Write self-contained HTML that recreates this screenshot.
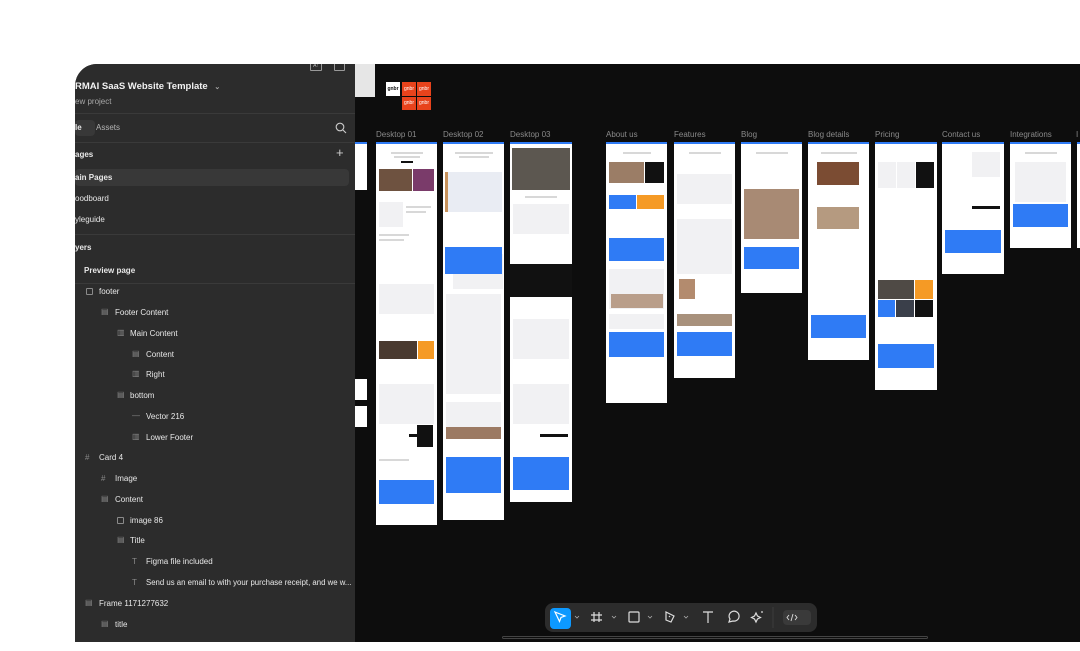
<!DOCTYPE html>
<html><head><meta charset="utf-8"><style>
*{margin:0;padding:0;box-sizing:border-box}
body{width:1080px;height:651px;background:#fff;position:relative;overflow:hidden;font-family:"Liberation Sans",sans-serif}
.a{position:absolute}
#panel{left:75px;top:64px;width:1005px;height:578px;background:#0d0d0d;border-top-left-radius:22px;overflow:hidden}
#side{left:75px;top:64px;width:280px;height:578px;background:#2c2c2c;border-top-left-radius:22px;overflow:hidden;color:#e8e8e8;font-size:8px}
#side .t{position:absolute;white-space:nowrap}
.dv{position:absolute;left:0;width:280px;height:1px;background:#3a3a3a}
.ic{position:absolute;width:7px;height:7px;border:1px solid #8a8a8a;border-radius:1px}
.f{position:absolute;background:#fff;border-top:2px solid #2f7bf5;overflow:hidden}
.f div{position:absolute}
.lb{position:absolute;top:130px;font-size:8px;color:#8a8a8a;white-space:nowrap}
.bl{background:#2f7bf5}
.bk{background:#111}
.br{background:#8a6a55}
.or{background:#f59a25}
.gl{background:#d8d8d8;height:2px}
.gr{background:#f1f1f3}
</style></head><body>
<div id="panel" class="a"></div>
<div class="a" style="left:355px;top:64px;width:20px;height:33px;background:#e6e6e6"></div>
<div class="a" style="left:386px;top:82px;width:14px;height:14px;background:#fff;font-size:5px;font-weight:bold;color:#111;text-align:center;line-height:14px">gnbr</div>
<div class="a" style="left:402px;top:82px;width:14px;height:14px;background:#e8431c;font-size:5px;color:#fff;text-align:center;line-height:14px">gnbr</div>
<div class="a" style="left:417px;top:82px;width:14px;height:14px;background:#e8431c;font-size:5px;color:#fff;text-align:center;line-height:14px">gnbr</div>
<div class="a" style="left:402px;top:97px;width:14px;height:13px;background:#e8431c;font-size:5px;color:#fff;text-align:center;line-height:13px">gnbr</div>
<div class="a" style="left:417px;top:97px;width:14px;height:13px;background:#e8431c;font-size:5px;color:#fff;text-align:center;line-height:13px">gnbr</div>

<div class="a" style="left:355px;top:142px;width:12px;height:48px;background:#fff;border-top:2px solid #2f7bf5"></div>
<div class="a" style="left:355px;top:379px;width:12px;height:21px;background:#fff"></div>
<div class="a" style="left:355px;top:406px;width:12px;height:21px;background:#fff"></div>

<div class="lb" style="left:376px">Desktop 01</div>
<div class="lb" style="left:443px">Desktop 02</div>
<div class="lb" style="left:510px">Desktop 03</div>
<div class="lb" style="left:606px">About us</div>
<div class="lb" style="left:674px">Features</div>
<div class="lb" style="left:741px">Blog</div>
<div class="lb" style="left:808px">Blog details</div>
<div class="lb" style="left:875px">Pricing</div>
<div class="lb" style="left:942px">Contact us</div>
<div class="lb" style="left:1010px">Integrations</div>
<div class="lb" style="left:1076px">I</div>

<div class="f" style="left:376px;top:142px;width:61px;height:383px">
<div class="gl" style="left:15px;top:8px;width:32px"></div><div class="gl" style="left:18px;top:12px;width:26px"></div>
<div class="bk" style="left:25px;top:17px;width:12px;height:2px"></div>
<div class="br" style="left:3px;top:25px;width:33px;height:22px;background:#6e5240"></div>
<div class="a" style="left:37px;top:25px;width:21px;height:22px;background:#7a3b6a"></div>
<div class="gr" style="left:3px;top:58px;width:24px;height:25px"></div>
<div class="gl" style="left:30px;top:62px;width:25px"></div><div class="gl" style="left:30px;top:67px;width:20px"></div>
<div class="gl" style="left:3px;top:90px;width:30px"></div><div class="gl" style="left:3px;top:95px;width:25px"></div>
<div class="gr" style="left:3px;top:140px;width:55px;height:30px"></div>
<div class="br" style="left:3px;top:197px;width:38px;height:18px;background:#4a3a30"></div>
<div class="or" style="left:42px;top:197px;width:16px;height:18px"></div>
<div class="gr" style="left:3px;top:240px;width:55px;height:40px"></div>
<div class="bk" style="left:41px;top:281px;width:16px;height:22px"></div>
<div class="bk" style="left:33px;top:290px;width:22px;height:3px"></div>
<div class="gl" style="left:3px;top:315px;width:30px"></div>
<div class="bl" style="left:3px;top:336px;width:55px;height:24px"></div>
</div>
<div class="f" style="left:443px;top:142px;width:61px;height:378px">
<div class="gl" style="left:12px;top:8px;width:38px"></div><div class="gl" style="left:16px;top:12px;width:30px"></div>
<div class="a" style="left:2px;top:28px;width:57px;height:40px;background:#e9ecf3"></div>
<div class="a" style="left:2px;top:28px;width:3px;height:40px;background:#c7925c"></div>
<div class="gr" style="left:10px;top:110px;width:50px;height:35px"></div>
<div class="bl" style="left:2px;top:103px;width:57px;height:27px"></div>
<div class="gr" style="left:3px;top:150px;width:55px;height:100px"></div>
<div class="gr" style="left:3px;top:258px;width:55px;height:30px"></div>
<div class="br" style="left:3px;top:283px;width:55px;height:12px;background:#9c7a63"></div>
<div class="bl" style="left:3px;top:313px;width:55px;height:36px"></div>
</div>
<div class="f" style="left:510px;top:142px;width:62px;height:360px">
<div class="a" style="left:2px;top:4px;width:58px;height:42px;background:#5c5750"></div>
<div class="gl" style="left:15px;top:52px;width:32px"></div>
<div class="gr" style="left:3px;top:60px;width:56px;height:30px"></div>
<div class="bk" style="left:0;top:120px;width:62px;height:33px"></div>
<div class="gr" style="left:3px;top:175px;width:56px;height:40px"></div>
<div class="gr" style="left:3px;top:240px;width:56px;height:40px"></div>
<div class="bk" style="left:30px;top:290px;width:28px;height:3px"></div>
<div class="bl" style="left:3px;top:313px;width:56px;height:33px"></div>
</div>
<div class="f" style="left:606px;top:142px;width:61px;height:261px">
<div class="gl" style="left:17px;top:8px;width:28px"></div>
<div class="br" style="left:3px;top:18px;width:35px;height:21px;background:#9b7d66"></div>
<div class="bk" style="left:39px;top:18px;width:19px;height:21px"></div>
<div class="bl" style="left:3px;top:51px;width:27px;height:14px"></div>
<div class="or" style="left:31px;top:51px;width:27px;height:14px"></div>
<div class="bl" style="left:3px;top:94px;width:55px;height:23px"></div>
<div class="gr" style="left:3px;top:125px;width:55px;height:40px"></div>
<div class="br" style="left:5px;top:150px;width:52px;height:14px;background:#b99e8a"></div>
<div class="gr" style="left:3px;top:170px;width:55px;height:15px"></div>
<div class="bl" style="left:3px;top:188px;width:55px;height:25px"></div>
</div>
<div class="f" style="left:674px;top:142px;width:61px;height:236px">
<div class="gl" style="left:15px;top:8px;width:32px"></div>
<div class="gr" style="left:3px;top:30px;width:55px;height:30px"></div>
<div class="gr" style="left:3px;top:75px;width:55px;height:30px"></div>
<div class="gr" style="left:3px;top:100px;width:55px;height:30px"></div>
<div class="br" style="left:5px;top:135px;width:16px;height:20px;background:#b38b6e"></div>
<div class="br" style="left:3px;top:170px;width:55px;height:12px;background:#a8917c"></div>
<div class="bl" style="left:3px;top:188px;width:55px;height:24px"></div>
</div>
<div class="f" style="left:741px;top:142px;width:61px;height:151px">
<div class="gl" style="left:15px;top:8px;width:32px"></div>
<div class="br" style="left:3px;top:45px;width:55px;height:50px;background:#a88a74"></div>
<div class="bl" style="left:3px;top:103px;width:55px;height:22px"></div>
</div>
<div class="f" style="left:808px;top:142px;width:61px;height:218px">
<div class="gl" style="left:13px;top:8px;width:36px"></div>
<div class="br" style="left:9px;top:18px;width:42px;height:23px;background:#7b4c33"></div>
<div class="br" style="left:9px;top:63px;width:42px;height:22px;background:#b59a80"></div>
<div class="bl" style="left:3px;top:171px;width:55px;height:23px"></div>
</div>
<div class="f" style="left:875px;top:142px;width:62px;height:248px">
<div class="gr" style="left:3px;top:18px;width:18px;height:26px"></div>
<div class="gr" style="left:22px;top:18px;width:18px;height:26px"></div>
<div class="bk" style="left:41px;top:18px;width:18px;height:26px"></div>
<div class="br" style="left:3px;top:136px;width:36px;height:19px;background:#4f4a45"></div>
<div class="or" style="left:40px;top:136px;width:18px;height:19px"></div>
<div class="bl" style="left:3px;top:156px;width:17px;height:17px"></div>
<div class="br" style="left:21px;top:156px;width:18px;height:17px;background:#3a3f4a"></div>
<div class="bk" style="left:40px;top:156px;width:18px;height:17px"></div>
<div class="bl" style="left:3px;top:200px;width:56px;height:24px"></div>
</div>
<div class="f" style="left:942px;top:142px;width:62px;height:132px">
<div class="gr" style="left:30px;top:8px;width:28px;height:25px"></div>
<div class="bk" style="left:30px;top:62px;width:28px;height:3px"></div>
<div class="bl" style="left:3px;top:86px;width:56px;height:23px"></div>
</div>
<div class="f" style="left:1010px;top:142px;width:61px;height:106px">
<div class="gl" style="left:15px;top:8px;width:32px"></div>
<div class="gr" style="left:5px;top:18px;width:51px;height:40px"></div>
<div class="bl" style="left:3px;top:60px;width:55px;height:23px"></div>
</div>
<div class="f" style="left:1077px;top:142px;width:5px;height:106px"></div>

<div class="a" style="left:545px;top:603px;width:272px;height:29px;background:#2c2c2c;border-radius:8px"></div>
<div class="a" style="left:550px;top:608px;width:21px;height:21px;background:#0d99ff;border-radius:4px"></div>
<svg class="a" style="left:545px;top:603px" width="272" height="29" fill="none" stroke="#ddd" stroke-width="1.2">
<path d="M10 9l10 4-4 1.5-1.5 4z" stroke="#fff"/>
<path d="M30 13l2 2 2-2" stroke="#aaa" stroke-width="0.8"/>
<path d="M49 9v10M54 9v10M46 12h11M46 17h11"/>
<path d="M67 13l2 2 2-2" stroke="#aaa" stroke-width="0.8"/>
<rect x="84" y="9" width="10" height="10" rx="1"/>
<path d="M103 13l2 2 2-2" stroke="#aaa" stroke-width="0.8"/>
<path d="M121 9l8 4-3 6-5-2z M124 13l1 1"/>
<path d="M139 13l2 2 2-2" stroke="#aaa" stroke-width="0.8"/>
<path d="M158 9h10M163 9v11"/>
<path d="M184 19l1-3a5 5 0 1 1 3 2z"/>
<path d="M211 10l1.5 3 3 1.5-3 1.5-1.5 3-1.5-3-3-1.5 3-1.5z M217 8v2"/>
<path d="M228 4v21" stroke="#3a3a3a"/>
<rect x="238" y="7" width="28" height="15" rx="4" fill="#3a3a3a" stroke="none"/>
<path d="M244 12l-2 2.5 2 2.5M250 12l2 2.5-2 2.5M248 11l-2 7" stroke-width="0.9"/>
</svg>
<div class="a" style="left:502px;top:636px;width:426px;height:3px;border:1px solid #444;border-radius:2px"></div>

<div id="side" class="a">
<div class="t" style="left:0;top:17px;font-size:9.5px;font-weight:bold;color:#f2f2f2">RMAI SaaS Website Template <span style="font-size:7px;color:#aaa;margin-left:4px">⌄</span></div>
<div class="t" style="left:0;top:33px;color:#a8a8a8">ew project</div>
<div class="a" style="left:235px;top:-2px;width:12px;height:9px;border:1px solid #999;border-radius:1px;font-size:5px;color:#bbb;text-align:center;line-height:7px">A↑</div>
<div class="a" style="left:259px;top:-2px;width:11px;height:9px;border:1px solid #999;border-radius:1px"></div>
<div class="dv" style="top:49px"></div>
<div class="a" style="left:0;top:56px;width:20px;height:16px;background:#383838;border-radius:4px"></div>
<div class="t" style="left:0;top:59px;font-weight:bold">le</div>
<div class="t" style="left:21px;top:59px;color:#b5b5b5">Assets</div>
<svg class="a" style="left:260px;top:58px" width="12" height="12" fill="none" stroke="#ccc" stroke-width="1.1"><circle cx="5" cy="5" r="3.8"/><path d="M8 8l3 3"/></svg>
<div class="dv" style="top:78px"></div>
<div class="t" style="left:0;top:86px;font-weight:bold">ages</div>
<div class="t" style="left:261px;top:81px;font-size:13px;color:#ccc">+</div>
<div class="a" style="left:0;top:105px;width:274px;height:17px;background:#383838;border-radius:4px"></div>
<div class="t" style="left:0;top:109px;font-weight:bold">ain Pages</div>
<div class="t" style="left:0;top:130px">oodboard</div>
<div class="t" style="left:0;top:151px">yleguide</div>
<div class="dv" style="top:170px"></div>
<div class="t" style="left:0;top:179px;font-weight:bold">yers</div>
<div class="t" style="left:9px;top:202px;font-weight:bold">Preview page</div>
<div class="dv" style="top:219px"></div>
<div class="ic" style="left:11px;top:224px"></div><div class="t" style="left:24px;top:223px">footer</div>
<div class="t" style="left:26px;top:243px;color:#888">▤</div><div class="t" style="left:40px;top:244px">Footer Content</div>
<div class="t" style="left:42px;top:264px;color:#888">▥</div><div class="t" style="left:55px;top:265px">Main Content</div>
<div class="t" style="left:57px;top:285px;color:#888">▤</div><div class="t" style="left:71px;top:286px">Content</div>
<div class="t" style="left:57px;top:305px;color:#888">▥</div><div class="t" style="left:71px;top:306px">Right</div>
<div class="t" style="left:42px;top:326px;color:#888">▤</div><div class="t" style="left:55px;top:327px">bottom</div>
<div class="t" style="left:57px;top:347px;color:#888">—</div><div class="t" style="left:71px;top:348px">Vector 216</div>
<div class="t" style="left:57px;top:368px;color:#888">▥</div><div class="t" style="left:71px;top:369px">Lower Footer</div>
<div class="t" style="left:10px;top:389px;color:#888">#</div><div class="t" style="left:24px;top:389px">Card 4</div>
<div class="t" style="left:26px;top:410px;color:#888">#</div><div class="t" style="left:40px;top:410px">Image</div>
<div class="t" style="left:26px;top:430px;color:#888">▤</div><div class="t" style="left:40px;top:431px">Content</div>
<div class="ic" style="left:42px;top:453px"></div><div class="t" style="left:55px;top:452px">image 86</div>
<div class="t" style="left:42px;top:471px;color:#888">▤</div><div class="t" style="left:55px;top:472px">Title</div>
<div class="t" style="left:57px;top:493px;color:#888">T</div><div class="t" style="left:71px;top:493px">Figma file included</div>
<div class="t" style="left:57px;top:514px;color:#888">T</div><div class="t" style="left:71px;top:514px;font-size:7.8px">Send us an email to with your purchase receipt, and we w...</div>
<div class="t" style="left:10px;top:534px;color:#888">▤</div><div class="t" style="left:24px;top:535px">Frame 1171277632</div>
<div class="t" style="left:26px;top:555px;color:#888">▤</div><div class="t" style="left:40px;top:556px">title</div>
</div>
</body></html>
